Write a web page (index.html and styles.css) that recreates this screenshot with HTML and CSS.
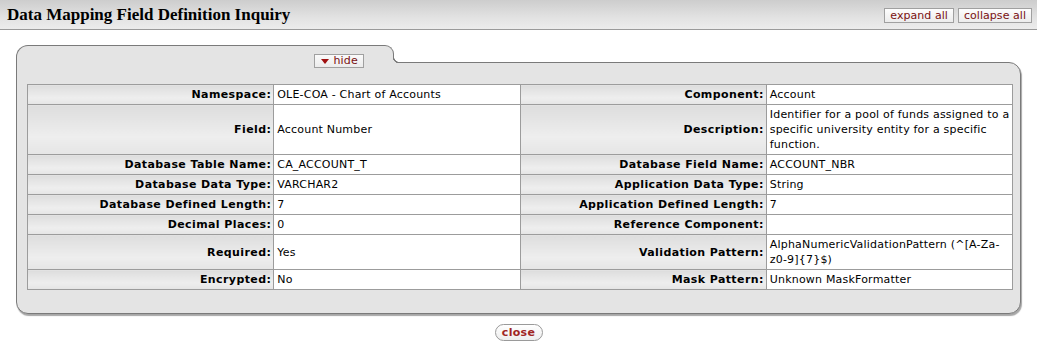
FILE: index.html
```html
<!DOCTYPE html>
<html>
<head>
    <meta charset="UTF-8">
    <title>Data Mapping Field Definition Inquiry</title>
    <link rel="stylesheet" href="styles.css">
</head>
<body>
    <div class="headerarea">
        <h1>Data Mapping Field Definition Inquiry</h1>
        <div class="header-buttons">
            <button class="tinybutton">expand all</button>
            <button class="tinybutton">collapse all</button>
        </div>
    </div>

    <div class="tab-container">
        <div class="tab-row">
            <div class="tab">
                <button class="hide-button"><span class="arrow"></span>hide</button>
            </div>
        </div>
        <div class="tab-body">
            <table class="datatable">
                <colgroup>
                    <col class="col-quarter">
                    <col class="col-quarter">
                    <col class="col-quarter">
                    <col class="col-quarter">
                </colgroup>
                <tr>
                    <th>Namespace:</th>
                    <td>OLE-COA - Chart of Accounts</td>
                    <th>Component:</th>
                    <td>Account</td>
                </tr>
                <tr>
                    <th>Field:</th>
                    <td>Account Number</td>
                    <th>Description:</th>
                    <td>Identifier for a pool of funds assigned to a specific university entity for a specific function.</td>
                </tr>
                <tr>
                    <th>Database Table Name:</th>
                    <td>CA_ACCOUNT_T</td>
                    <th>Database Field Name:</th>
                    <td>ACCOUNT_NBR</td>
                </tr>
                <tr>
                    <th>Database Data Type:</th>
                    <td>VARCHAR2</td>
                    <th>Application Data Type:</th>
                    <td>String</td>
                </tr>
                <tr>
                    <th>Database Defined Length:</th>
                    <td>7</td>
                    <th>Application Defined Length:</th>
                    <td>7</td>
                </tr>
                <tr>
                    <th>Decimal Places:</th>
                    <td>0</td>
                    <th>Reference Component:</th>
                    <td></td>
                </tr>
                <tr>
                    <th>Required:</th>
                    <td>Yes</td>
                    <th>Validation Pattern:</th>
                    <td>AlphaNumericValidationPattern (^[A-Za-z0-9]{7}$)</td>
                </tr>
                <tr>
                    <th>Encrypted:</th>
                    <td>No</td>
                    <th>Mask Pattern:</th>
                    <td>Unknown MaskFormatter</td>
                </tr>
            </table>
        </div>
    </div>

    <div class="bottom-buttons">
        <button class="close-button">close</button>
    </div>
</body>
</html>
```

FILE: styles.css
```css
body {
    margin: 0;
    font-family: "DejaVu Sans", Verdana, sans-serif;
    font-size: 11px;
    background-color: #fff;
    color: #000;
}

.headerarea {
    height: 29px;
    display: flex;
    align-items: center;
    justify-content: space-between;
    background: linear-gradient(to bottom, #cdcdcd, #e2e2e2 60%, #ececec);
    border-bottom: 1px solid #9a9a9a;
}

.headerarea h1 {
    margin: 0 0 0 7px;
    font-family: "Liberation Serif", "Times New Roman", serif;
    font-size: 17px;
    font-weight: bold;
}

.header-buttons {
    display: flex;
    gap: 4px;
    margin-right: 5px;
    margin-top: 2px;
}

.tinybutton {
    height: 15px;
    padding: 0 5px;
    font-family: "DejaVu Sans", Verdana, sans-serif;
    font-size: 11px;
    line-height: 13px;
    letter-spacing: 0.05px;
    color: #7a1010;
    background: linear-gradient(to bottom, #fdfdfd, #ececec);
    border: 1px solid #a0a0a0;
    border-radius: 0;
    cursor: pointer;
}

/* panel */

.tab-container {
    width: 1005px;
    margin: 15px 0 0 16px;
}

.tab-row {
    height: 17px;
    display: flex;
}

.tab {
    position: relative;
    z-index: 1;
    box-sizing: border-box;
    width: 378px;
    height: 18px;
    display: flex;
    justify-content: flex-end;
    align-items: flex-start;
    padding: 8px 29px 0 0;
    background-color: #e4e4e4;
    border: 1px solid #7a7a7a;
    border-bottom: none;
    border-radius: 12px 9px 0 0;
}

/* concave join between the tab and the panel top line */
.tab::after {
    content: "";
    position: absolute;
    left: 100%;
    bottom: 0;
    width: 6px;
    height: 6px;
    background: radial-gradient(circle at 100% 0, rgba(255,255,255,0) 4.6px, #7a7a7a 5px, #7a7a7a 6px, #e4e4e4 6.4px);
}

.hide-button {
    display: flex;
    align-items: center;
    gap: 4px;
    height: 14px;
    padding: 0 5px 0 6px;
    font-family: "DejaVu Sans", Verdana, sans-serif;
    font-size: 11px;
    line-height: 12px;
    letter-spacing: 0.2px;
    color: #7a1010;
    background: linear-gradient(to bottom, #fafafa, #ececec);
    border: 1px solid #a0a0a0;
    cursor: pointer;
}

.arrow {
    width: 0;
    height: 0;
    border-left: 4px solid transparent;
    border-right: 4px solid transparent;
    border-top: 5px solid #a01010;
}

.tab-body {
    background-color: #e4e4e4;
    border: 1px solid #7a7a7a;
    border-radius: 0 12px 12px 12px;
    box-shadow: 1px 2px 1px rgba(0, 0, 0, 0.35);
    padding: 21px 7px 23px 10px;
}

.datatable {
    width: 100%;
    border-collapse: collapse;
    table-layout: fixed;
}

.col-quarter {
    width: 25%;
}

.datatable th,
.datatable td {
    border: 1px solid #9c9c9c;
    padding: 2px 2px 2px 4px;
    line-height: 15px;
    font-size: 11px;
    vertical-align: middle;
}

.datatable th {
    text-align: right;
    font-weight: bold;
    letter-spacing: 0.4px;
    background: linear-gradient(to bottom, #dddddd, #eeeeee 65%, #e5e5e5);
}

.datatable td {
    padding: 2px 0 2px 3px;
    text-align: left;
    letter-spacing: 0.2px;
    background-color: #fff;
}

.bottom-buttons {
    display: flex;
    justify-content: center;
    margin-top: 10px;
}

.close-button {
    height: 17px;
    width: 48px;
    padding: 0;
    font-family: "DejaVu Sans", Verdana, sans-serif;
    font-size: 11px;
    font-weight: bold;
    letter-spacing: 0.3px;
    color: #a02424;
    background: linear-gradient(to bottom, #ffffff, #ededed);
    border: 1px solid #9a9a9a;
    border-radius: 9px;
    cursor: pointer;
}
```
